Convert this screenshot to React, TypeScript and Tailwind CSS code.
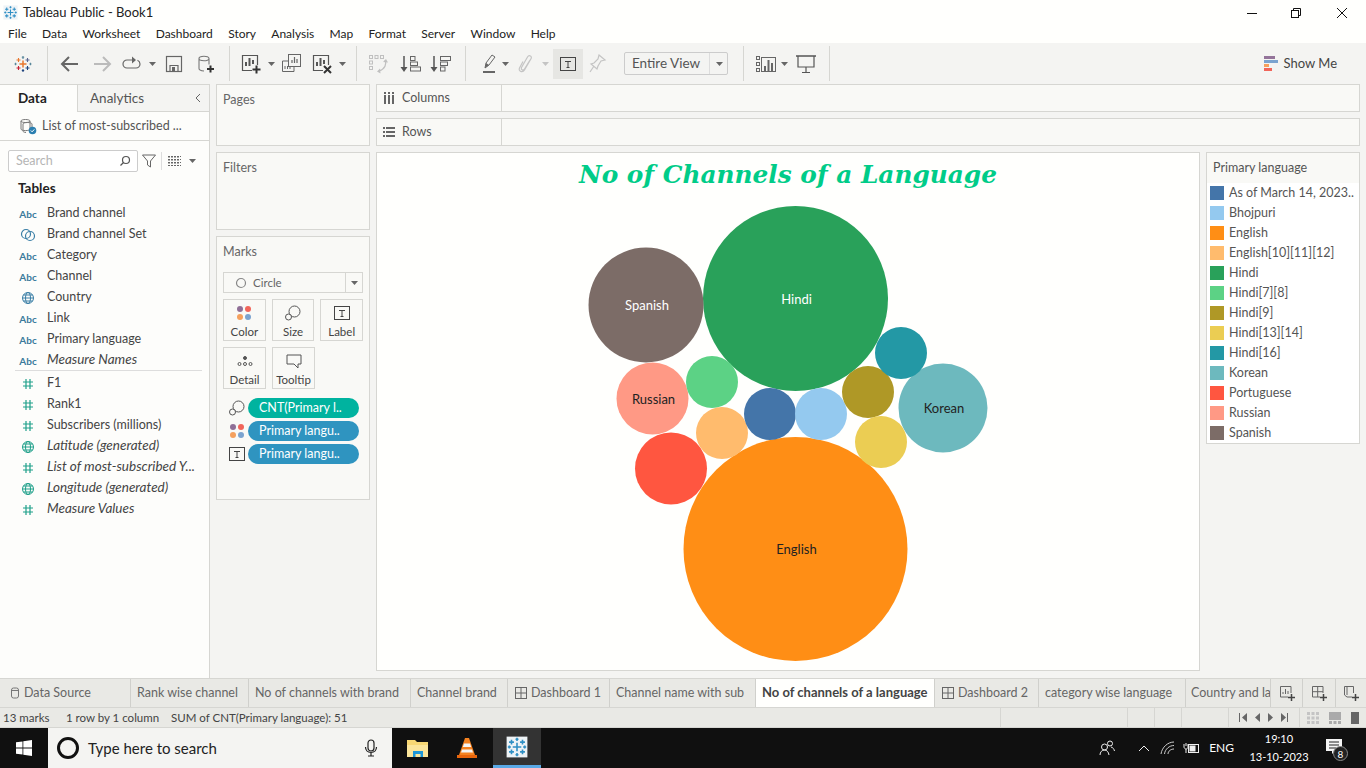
import React from 'react'

const menus = ['File', 'Data', 'Worksheet', 'Dashboard', 'Story', 'Analysis', 'Map', 'Format', 'Server', 'Window', 'Help']

const fields: { kind: 'abc' | 'set' | 'geo' | 'num' | 'numgeo'; name: string; italic?: boolean }[] = [
  { kind: 'abc', name: 'Brand channel' },
  { kind: 'set', name: 'Brand channel Set' },
  { kind: 'abc', name: 'Category' },
  { kind: 'abc', name: 'Channel' },
  { kind: 'geo', name: 'Country' },
  { kind: 'abc', name: 'Link' },
  { kind: 'abc', name: 'Primary language' },
  { kind: 'abc', name: 'Measure Names', italic: true },
]

const measures: { kind: 'abc' | 'set' | 'geo' | 'num' | 'numgeo'; name: string; italic?: boolean }[] = [
  { kind: 'num', name: 'F1' },
  { kind: 'num', name: 'Rank1' },
  { kind: 'num', name: 'Subscribers (millions)' },
  { kind: 'numgeo', name: 'Latitude (generated)', italic: true },
  { kind: 'num', name: 'List of most-subscribed Y...', italic: true },
  { kind: 'numgeo', name: 'Longitude (generated)', italic: true },
  { kind: 'num', name: 'Measure Values', italic: true },
]

const legend = [
  ['As of March 14, 2023..', '#4475a9'],
  ['Bhojpuri', '#94c9ef'],
  ['English', '#ff8e15'],
  ['English[10][11][12]', '#ffbb6d'],
  ['Hindi', '#29a15a'],
  ['Hindi[7][8]', '#5cd285'],
  ['Hindi[9]', '#af9826'],
  ['Hindi[13][14]', '#ebcd53'],
  ['Hindi[16]', '#2398a5'],
  ['Korean', '#6db9be'],
  ['Portuguese', '#ff5640'],
  ['Russian', '#ff9985'],
  ['Spanish', '#7c6c67'],
]

// page coordinates minus the viz origin (377, 153)
const bubbles = [
  { cx: 418.5, cy: 145.5, r: 92.5, fill: '#29a15a', label: 'Hindi', text: '#ffffff' },
  { cx: 418.5, cy: 396, r: 112, fill: '#ff8e15', label: 'English', text: '#222222' },
  { cx: 269, cy: 152, r: 57.5, fill: '#7c6c67', label: 'Spanish', text: '#ffffff' },
  { cx: 566, cy: 255, r: 44.5, fill: '#6db9be', label: 'Korean', text: '#222222' },
  { cx: 275.5, cy: 245.5, r: 36, fill: '#ff9985', label: 'Russian', text: '#222222' },
  { cx: 294, cy: 315.5, r: 36, fill: '#ff5640' },
  { cx: 335, cy: 229, r: 26, fill: '#5cd285' },
  { cx: 345, cy: 280, r: 26, fill: '#ffbb6d' },
  { cx: 393, cy: 261, r: 26, fill: '#4475a9' },
  { cx: 444, cy: 261, r: 26, fill: '#94c9ef' },
  { cx: 491, cy: 239, r: 26, fill: '#af9826' },
  { cx: 504, cy: 289, r: 26, fill: '#ebcd53' },
  { cx: 524, cy: 200, r: 26, fill: '#2398a5' },
]

const tabs: { name: string; w: string; icon?: 'db' | 'dash'; active?: boolean }[] = [
  { name: 'Data Source', w: 'w-[131px]', icon: 'db' },
  { name: 'Rank wise channel', w: 'w-[118px]' },
  { name: 'No of channels with brand', w: 'w-[162px]' },
  { name: 'Channel brand', w: 'w-[97px]' },
  { name: 'Dashboard 1', w: 'w-[102px]', icon: 'dash' },
  { name: 'Channel name with sub', w: 'w-[146px]' },
  { name: 'No of channels of a language', w: 'w-[179px]', active: true },
  { name: 'Dashboard 2', w: 'w-[104px]', icon: 'dash' },
  { name: 'category wise language', w: 'w-[147px]' },
]

function Caret({ light, className = '' }: { light?: boolean; className?: string }) {
  return (
    <svg width="7" height="4" viewBox="0 0 7 4" className={className}>
      <path d="M0 0h7L3.5 4z" fill={light ? '#c4c4c4' : '#666'} />
    </svg>
  )
}

function TableauLogo({ size = 18 }: { size?: number }) {
  return (
    <svg width={size} height={size} viewBox="0 0 18 18" fill="none" strokeWidth="1.1">
      <path d="M9 5.5v7M5.5 9h7" stroke="#e8762d" strokeWidth="1.5" />
      <path d="M4.5 3v4M2.5 5h4" stroke="#e8762d" />
      <path d="M13.500 3v4M11.500 5h4" stroke="#5b6591" />
      <path d="M4.500 11v4M2.500 13h4" stroke="#c72035" />
      <path d="M13.500 11v4M11.500 13h4" stroke="#1f447e" />
      <path d="M9 1v3M7.800 2.300h2.400" stroke="#59879b" />
      <path d="M9 14v3M7.800 15.500h2.400" stroke="#1f447e" />
      <path d="M1.500 7.800v2.400M.5 9h2.200" stroke="#59879b" />
      <path d="M16.500 7.800v2.400M15.300 9h2.200" stroke="#59879b" />
    </svg>
  )
}

function AppLogo({ size = 18 }: { size?: number }) {
  return (
    <svg width={size} height={size} viewBox="0 0 18 18" fill="none">
      <rect x="0.5" y="0.5" width="17" height="17" fill="#eef3f6" />
      <g stroke="#2f8fc4" strokeWidth="1.3">
        <path d="M9 5.5v7M5.5 9h7" />
        <path d="M4.5 3v4M2.5 5h4M13.5 3v4M11.5 5h4M4.5 11v4M2.5 13h4M13.5 11v4M11.5 13h4" />
        <path d="M9 1.5v2.5M7.8 2.7h2.4M9 14v2.5M7.8 15.3h2.4M1.5 9H4M2.7 7.8v2.4M14 9h2.5M15.3 7.8v2.4" />
      </g>
    </svg>
  )
}

function ToolIcon({ name }: { name: string }) {
  const p = { width: 22, height: 22, viewBox: '0 0 22 22', fill: 'none' }
  switch (name) {
    case 'back':
      return <svg {...p}><path d="M19 11H3M10 4l-7 7 7 7" stroke="#666" strokeWidth="2" /></svg>
    case 'forward':
      return <svg {...p}><path d="M3 11h16M12 4l7 7-7 7" stroke="#bbb" strokeWidth="2" /></svg>
    case 'cycle':
      return (
        <svg {...p}>
          <path d="M12 7H6a4 4 0 0 0 0 8h9a4 4 0 0 0 4-4c0-2-1-3-2.500-3.700" stroke="#666" strokeWidth="1.200" />
          <path d="M11 3.500l4 3.500-4 3.500z" fill="#666" />
        </svg>
      )
    case 'save':
      return (
        <svg {...p}>
          <rect x="3.500" y="3.500" width="15" height="15" stroke="#666" strokeWidth="1.200" />
          <path d="M7 18.500v-6h8v6" stroke="#666" strokeWidth="1.200" />
          <rect x="9" y="14" width="3" height="4" fill="#666" />
        </svg>
      )
    case 'newds':
      return (
        <svg {...p}>
          <path d="M4 5.500c0-3 10-3 10 0v6M4 5.500v10c0 1.500 2 2.300 5 2.500M4 5.500c0 3 10 3 10 0" stroke="#777" strokeWidth="1.100" />
          <path d="M15.500 12.500v7M12 16h7" stroke="#333" strokeWidth="2" />
        </svg>
      )
    case 'newsheet':
      return (
        <svg {...p}>
          <path d="M12 17.500H2.500v-15h15V12" stroke="#555" strokeWidth="1.200" />
          <path d="M6 13V9M9.500 13V5M13 11V7" stroke="#555" strokeWidth="2" />
          <path d="M16.500 12.500v8M12.500 16.500h8" stroke="#333" strokeWidth="2" />
        </svg>
      )
    case 'dup':
      return (
        <svg {...p}>
          <rect x="8.500" y="1.500" width="12" height="12" stroke="#666" fill="#f4f4f2" />
          <path d="M12 10V7M14.500 10V4M17 10V6" stroke="#666" strokeWidth="1.200" />
          <path d="M8 8H2.500v10.500H14V14" stroke="#666" />
          <path d="M5 16v-3M7.500 16v-3M10 16v-2" stroke="#666" />
        </svg>
      )
    case 'clear':
      return (
        <svg {...p}>
          <path d="M12 17.500H2.500v-15h15V12" stroke="#555" strokeWidth="1.200" />
          <path d="M6 13V9M9.500 13V5M13 11V7" stroke="#555" strokeWidth="2" />
          <path d="M13 13l7 7M20 13l-7 7" stroke="#333" strokeWidth="2" />
        </svg>
      )
    case 'swap':
      return (
        <svg {...p}>
          <g stroke="#c0c0c0">
            <rect x="1.500" y="2.500" width="3" height="3" />
            <rect x="7" y="2.500" width="3" height="3" />
            <rect x="12.500" y="2.500" width="3" height="3" />
            <rect x="1.500" y="8" width="3" height="3" />
            <rect x="1.500" y="13.500" width="3" height="3" />
            <path d="M17 7c2 4 0 9-6 11" strokeWidth="1.300" />
          </g>
          <path d="M12 15.500l-3 3 3.500 2zM15 9l3-3 2 3.500z" fill="#c0c0c0" />
        </svg>
      )
    case 'sortasc':
      return (
        <svg {...p}>
          <path d="M5 3v13" stroke="#555" strokeWidth="1.500" />
          <path d="M1.500 14h7L5 19z" fill="#555" />
          <rect x="11.500" y="3.500" width="4.500" height="4" stroke="#666" />
          <rect x="11.500" y="9" width="7" height="3.500" stroke="#666" />
          <rect x="11.500" y="14" width="10" height="4" stroke="#666" />
        </svg>
      )
    case 'sortdesc':
      return (
        <svg {...p}>
          <path d="M5 3v13" stroke="#555" strokeWidth="1.500" />
          <path d="M1.500 14h7L5 19z" fill="#555" />
          <rect x="11.500" y="3.500" width="10" height="4" stroke="#666" />
          <rect x="11.500" y="9" width="7" height="3.500" stroke="#666" />
          <rect x="11.500" y="14" width="4.500" height="4" stroke="#666" />
        </svg>
      )
    case 'highlight':
      return (
        <svg {...p}>
          <path d="M6 15l1-5 6-8 3 2-6 8z" stroke="#666" />
          <path d="M6 15l4-3-3-2z" fill="#666" />
          <rect x="4" y="18" width="12" height="2" fill="#666" />
        </svg>
      )
    case 'clip':
      return (
        <svg {...p}>
          <path d="M15 7l-5.500 9c-1.200 2-4 .8-3-1.500L12.500 4c1.500-2.500 5-.8 3.500 1.800L9.500 17c-2 3.200-6.500 1.200-5-2L8 8.500" stroke="#c4c4c4" strokeWidth="1.200" />
        </svg>
      )
    case 'pin':
      return (
        <svg {...p}>
          <path d="M13 2l6 5-4 1-3 5-1 3-6-5 3-1 4-4zM8 13l-4 6" stroke="#c4c4c4" strokeWidth="1.200" />
        </svg>
      )
    case 'showme':
      return (
        <svg {...p}>
          <g stroke="#666">
            <rect x="1.500" y="3.500" width="3" height="3" />
            <rect x="1.500" y="9.500" width="3" height="3" />
            <rect x="1.500" y="15.500" width="3" height="3" />
            <rect x="6.500" y="4.500" width="14" height="14" />
          </g>
          <path d="M10 18v-5M13.500 18V7M17 18v-8" stroke="#666" strokeWidth="2" />
        </svg>
      )
    case 'present':
      return (
        <svg {...p}>
          <path d="M1 3h20" stroke="#555" strokeWidth="1.500" />
          <path d="M3 3v11h16V3M11 14v5M7 19.500h8" stroke="#555" strokeWidth="1.200" />
        </svg>
      )
    default:
      return null
  }
}

function Divider() {
  return <div className="h-[35px] w-px bg-[#d6d6d2]" />
}

function TIcon({ size = 18 }: { size?: number }) {
  return (
    <svg width={size} height={size} viewBox="0 0 18 18" fill="none">
      <rect x="1.500" y="2.500" width="15" height="13" stroke="#444" />
      <path d="M6 6.500h6M9 6.500v6M7.500 12.500h3" stroke="#444" />
    </svg>
  )
}

function ColorDots({ size = 16 }: { size?: number }) {
  return (
    <svg width={size} height={size} viewBox="0 0 16 16">
      <circle cx="4" cy="4" r="3" fill="#8f6f96" />
      <circle cx="12" cy="4" r="3" fill="#f1655a" />
      <circle cx="4" cy="12" r="3" fill="#f5a05d" />
      <circle cx="12" cy="12" r="3" fill="#7ba3cf" />
    </svg>
  )
}

function SizeIcon({ size = 16 }: { size?: number }) {
  return (
    <svg width={size} height={size} viewBox="0 0 16 16" fill="none" stroke="#555">
      <circle cx="9.500" cy="6.500" r="5.500" />
      <circle cx="3.500" cy="12" r="3" fill="#f9f9f6" />
    </svg>
  )
}

function FieldIcon({ kind }: { kind: string }) {
  if (kind === 'abc') {
    return <span className="w-[20px] text-center text-[10px] font-bold leading-none text-[#3a7a9c]">Abc</span>
  }
  if (kind === 'set') {
    return (
      <svg width="20" height="14" viewBox="0 0 20 14" fill="none" stroke="#3a7fa6" strokeWidth="1.200">
        <circle cx="8" cy="6" r="4.500" />
        <circle cx="12" cy="8" r="4.500" />
      </svg>
    )
  }
  if (kind === 'geo' || kind === 'numgeo') {
    const c = kind === 'geo' ? '#3a7fa6' : '#1fa08a'
    return (
      <svg width="20" height="14" viewBox="0 0 20 14" fill="none" stroke={c}>
        <circle cx="10" cy="7" r="5.500" />
        <ellipse cx="10" cy="7" rx="2.500" ry="5.500" />
        <path d="M4.500 7h11M5.300 4h9.400M5.300 10h9.400" />
      </svg>
    )
  }
  return (
    <svg width="20" height="14" viewBox="0 0 20 14" fill="none" stroke="#1fa08a" strokeWidth="1.200">
      <path d="M8 2v10M12 2v10M5 5h10M5 9h10" />
    </svg>
  )
}

function FieldRow({ kind, name, italic }: { kind: string; name: string; italic?: boolean }) {
  return (
    <div className="flex h-[21px] items-center pl-[18px]">
      <FieldIcon kind={kind} />
      <span className={`ml-[9px] whitespace-nowrap text-[#444] ${italic ? '-mt-[2px] text-[13.500px] italic' : '-mt-[1px] text-[12.500px]'}`}>{name}</span>
    </div>
  )
}

function MarkButton({ label, children }: { label: string; children: React.ReactNode }) {
  return (
    <div className="flex h-[42px] w-[43px] flex-col items-center justify-between border border-[#d6d6d2] pb-[1px] pt-[4px]">
      <div className="flex h-[18px] items-center">{children}</div>
      <span className="text-[11.500px] leading-[14px] text-[#444]">{label}</span>
    </div>
  )
}

function Pill({ icon, label, color }: { icon: React.ReactNode; label: string; color: string }) {
  return (
    <div className="flex h-[20px] items-center">
      <div className="flex w-[25px] justify-center pl-[3px]">{icon}</div>
      <div className={`flex h-[20px] w-[111px] items-center rounded-full pl-[11px] text-[12.500px] text-white ${color}`}>{label}</div>
    </div>
  )
}

function Shelf({ icon, label }: { icon: React.ReactNode; label: string }) {
  return (
    <div className="flex h-[28px] border border-[#d6d6d2] bg-[#f9f9f6]">
      <div className="flex w-[125px] items-center border-r border-[#d6d6d2] pl-[6px] text-[12.500px] text-[#555]">
        {icon}
        <span className="ml-[7px]">{label}</span>
      </div>
    </div>
  )
}

function App() {
  return (
    <div className="flex h-[768px] w-[1366px] flex-col overflow-hidden bg-[#f4f4f2] font-['Lato',sans-serif] text-[#333]">
      {/* title bar */}
      <div className="flex h-[25px] shrink-0 items-center bg-[#fffffd] pl-[3px]">
        <AppLogo size={15} />
        <span className="ml-[5px] text-[13px] text-[#222]">Tableau Public - Book1</span>
        <div className="ml-auto flex h-full items-center">
          <svg width="12" height="12" viewBox="0 0 12 12" className="mr-[32px]"><path d="M1 6.500h10" stroke="#111" /></svg>
          <svg width="12" height="12" viewBox="0 0 12 12" fill="none" stroke="#111" className="mr-[34px]">
            <rect x="1.500" y="3.500" width="7" height="7" />
            <path d="M3.500 3.500v-2h7v7h-2" />
          </svg>
          <svg width="12" height="12" viewBox="0 0 12 12" className="mr-[18px]"><path d="M1 1l10 10M11 1L1 11" stroke="#111" /></svg>
        </div>
      </div>

      {/* menu bar */}
      <div className="flex h-[18px] shrink-0 items-center gap-[15.300px] bg-[#fffffd] pl-[8px] text-[12px] text-[#222]">
        {menus.map(m => (
          <span key={m}>{m}</span>
        ))}
      </div>

      {/* toolbar */}
      <div className="flex h-[41px] shrink-0 items-center bg-[#f4f4f2] pl-[14px]">
        <TableauLogo />
        <div className="ml-[15px]"><Divider /></div>
        <div className="ml-[11px]"><ToolIcon name="back" /></div>
        <div className="ml-[10px]"><ToolIcon name="forward" /></div>
        <div className="ml-[8px]"><ToolIcon name="cycle" /></div>
        <Caret className="ml-[6px]" />
        <div className="ml-[7px]"><ToolIcon name="save" /></div>
        <div className="ml-[10px]"><ToolIcon name="newds" /></div>
        <div className="ml-[12px]"><Divider /></div>
        <div className="ml-[10px]"><ToolIcon name="newsheet" /></div>
        <Caret className="ml-[6px]" />
        <div className="ml-[5px]"><ToolIcon name="dup" /></div>
        <div className="ml-[9px]"><ToolIcon name="clear" /></div>
        <Caret className="ml-[6px]" />
        <div className="ml-[10px]"><Divider /></div>
        <div className="ml-[11px]"><ToolIcon name="swap" /></div>
        <div className="ml-[9px]"><ToolIcon name="sortasc" /></div>
        <div className="ml-[8px]"><ToolIcon name="sortdesc" /></div>
        <div className="ml-[14px]"><Divider /></div>
        <div className="ml-[13px]"><ToolIcon name="highlight" /></div>
        <Caret className="ml-[1px]" />
        <div className="ml-[6px]"><ToolIcon name="clip" /></div>
        <Caret light className="ml-[5px]" />
        <div className="ml-[4px] flex h-[30px] w-[30px] items-center justify-center bg-[#e6e6e3]"><TIcon /></div>
        <div className="ml-[3px]"><ToolIcon name="pin" /></div>
        <div className="ml-[16px] flex h-[23px] w-[104px] items-center rounded-[2px] border border-[#ccc] text-[13.500px] text-[#555]">
          <span className="w-[85px] border-r border-[#ddd] pl-[7px] leading-[21px]">Entire View</span>
          <Caret className="ml-[6px]" />
        </div>
        <div className="ml-[15px]"><Divider /></div>
        <div className="ml-[11px]"><ToolIcon name="showme" /></div>
        <Caret className="ml-[4px]" />
        <div className="ml-[7px]"><ToolIcon name="present" /></div>
        <div className="ml-[12px]"><Divider /></div>
        <div className="ml-auto mr-[29px] flex items-center text-[13px] text-[#444]">
          <svg width="15" height="16" viewBox="0 0 15 16" className="mr-[5px]">
            <rect x="0" y="0" width="11" height="3" fill="#94749a" />
            <rect x="0" y="4" width="14" height="3" fill="#7ba3cf" />
            <rect x="0" y="8" width="5" height="3" fill="#f5a05d" />
            <rect x="0" y="12" width="8" height="3" fill="#f1655a" />
          </svg>
          Show Me
        </div>
      </div>

      {/* main */}
      <div className="flex min-h-0 flex-1">
        {/* data pane */}
        <div className="flex w-[210px] shrink-0 flex-col border-r border-t border-[#d6d6d2] bg-[#fdfdfb]">
          <div className="flex h-[27px] shrink-0 text-[13.500px]">
            <div className="flex w-[77px] items-center pl-[18px] font-bold text-[#222]">Data</div>
            <div className="flex flex-1 items-center justify-between border-b border-l border-[#d6d6d2] bg-[#f4f4f2] pl-[12px] pr-[7px] text-[#555]">
              Analytics
              <svg width="8" height="10" viewBox="0 0 8 10" fill="none" stroke="#666"><path d="M6 1L2 5l4 4" /></svg>
            </div>
          </div>
          <div className="flex h-[29px] shrink-0 items-center border-b border-[#d6d6d2] pl-[20px] text-[12.500px] text-[#555]">
            <svg width="17" height="17" viewBox="0 0 17 17" fill="none">
              <path d="M1 3c0-2 9-2 9 0v8c0 1-2 1.600-4.500 1.600S1 12 1 11zM1 3c0 2 9 2 9 0" stroke="#777" />
              <path d="M3 6c0-2 9-2 9 0v3M3 6v7c0 .8 1 1.300 3 1.500" stroke="#777" />
              <circle cx="12.500" cy="12.500" r="3.800" fill="#2b7fb0" />
              <path d="M10.800 12.500l1.300 1.300 2.200-2.400" stroke="#fff" />
            </svg>
            <span className="ml-[5px]">List of most-subscribed ...</span>
          </div>
          <div className="flex shrink-0 items-center pl-[8px] pt-[9px]">
            <div className="flex h-[22px] w-[130px] items-center justify-between rounded-[2px] border border-[#ccc] bg-white pl-[7px] pr-[6px] text-[12.500px] text-[#b5b5b5]">
              Search
              <svg width="12" height="12" viewBox="0 0 12 12" fill="none" stroke="#555" strokeWidth="1.200"><circle cx="7" cy="5" r="3.500" /><path d="M4.500 7.500L1.500 10.500" /></svg>
            </div>
            <svg width="14" height="14" viewBox="0 0 14 14" fill="none" stroke="#666" className="ml-[4px]"><path d="M.5 1h13L8.500 7v6l-3-2V7z" /></svg>
            <div className="ml-[5px] h-[18px] w-px bg-[#ddd]" />
            <svg width="13" height="10" viewBox="0 0 13 10" className="ml-[6px]" stroke="#666"><path d="M0 .5h13M0 3.500h13M0 6.500h13M0 9.500h13M1 0v10M4 0v10M7 0v10M10 0v10" strokeDasharray="2 1" /></svg>
            <Caret className="ml-[8px]" />
          </div>
          <div className="pl-[18px] pt-[7px] text-[13.500px] font-bold leading-[18px] text-[#222]">Tables</div>
          <div className="pt-[6px]">
            {fields.map(f => (
              <FieldRow key={f.name} {...f} />
            ))}
          </div>
          <div className="-mt-[1px] mb-[2px] ml-[15px] mr-[7px] h-px bg-[#ddd]" />
          <div>
            {measures.map(f => (
              <FieldRow key={f.name} {...f} />
            ))}
          </div>
        </div>

        {/* cards column */}
        <div className="ml-[6px] flex w-[154px] shrink-0 flex-col gap-[6px]">
          <div className="h-[62px] border border-[#d6d6d2] bg-[#f9f9f6] pl-[6px] pt-[6px] text-[12.500px] text-[#666]">Pages</div>
          <div className="h-[78px] border border-[#d6d6d2] bg-[#f9f9f6] pl-[6px] pt-[6px] text-[12.500px] text-[#666]">Filters</div>
          <div className="h-[264px] border border-[#d6d6d2] bg-[#f9f9f6] px-[6px] pt-[7px]">
            <div className="text-[12.500px] leading-[16px] text-[#666]">Marks</div>
            <div className="mt-[12px] flex h-[21px] items-center border border-[#d6d6d2] text-[11.500px] text-[#666]">
              <svg width="12" height="12" viewBox="0 0 12 12" fill="none" stroke="#888" strokeWidth="1.200" className="ml-[11px]"><circle cx="6" cy="6" r="4.500" /></svg>
              <span className="ml-[6px] w-[92px]">Circle</span>
              <div className="flex h-full flex-1 items-center justify-center border-l border-[#d6d6d2]"><Caret /></div>
            </div>
            <div className="mt-[6px] flex gap-[6px]">
              <MarkButton label="Color"><ColorDots /></MarkButton>
              <MarkButton label="Size"><SizeIcon /></MarkButton>
              <MarkButton label="Label"><TIcon /></MarkButton>
            </div>
            <div className="mt-[6px] flex gap-[6px]">
              <MarkButton label="Detail">
                <svg width="16" height="14" viewBox="0 0 16 14" fill="none" stroke="#555">
                  <circle cx="8" cy="4" r="1.500" fill="#555" />
                  <circle cx="2.500" cy="10" r="1.500" />
                  <circle cx="8" cy="10" r="1.500" />
                  <circle cx="13.500" cy="10" r="1.500" />
                </svg>
              </MarkButton>
              <MarkButton label="Tooltip">
                <svg width="16" height="15" viewBox="0 0 16 15" fill="none" stroke="#555"><path d="M1 1h14v9h-3v4l-4-4H1z" /></svg>
              </MarkButton>
            </div>
            <div className="mt-[9px] flex flex-col gap-[3px]">
              <Pill icon={<SizeIcon />} label="CNT(Primary l.." color="bg-[#00b39f]" />
              <Pill icon={<ColorDots />} label="Primary langu.." color="bg-[#2f94c0]" />
              <Pill icon={<TIcon />} label="Primary langu.." color="bg-[#2f94c0]" />
            </div>
          </div>
        </div>

        {/* shelves and view */}
        <div className="ml-[6px] flex w-[984px] shrink-0 flex-col gap-[6px]">
          <Shelf
            label="Columns"
            icon={
              <svg width="12" height="12" viewBox="0 0 12 12" fill="#666">
                <rect x="1" y="0" width="2" height="2" /><rect x="1" y="3" width="2" height="9" />
                <rect x="5" y="0" width="2" height="2" /><rect x="5" y="3" width="2" height="9" />
                <rect x="9" y="0" width="2" height="2" /><rect x="9" y="3" width="2" height="9" />
              </svg>
            }
          />
          <Shelf
            label="Rows"
            icon={
              <svg width="12" height="12" viewBox="0 0 12 12" fill="#666">
                <rect x="0" y="1" width="2" height="2" /><rect x="3" y="1" width="9" height="2" />
                <rect x="0" y="5" width="2" height="2" /><rect x="3" y="5" width="9" height="2" />
                <rect x="0" y="9" width="2" height="2" /><rect x="3" y="9" width="9" height="2" />
              </svg>
            }
          />
          <div className="flex gap-[6px]">
            <div className="h-[519px] w-[824px] border border-[#d6d6d2] bg-[#fffffd]">
              <div className="pt-[5px] text-center font-['DejaVu_Serif',serif] text-[24.800px] font-bold italic leading-[34px] text-[#00cc88]">
                No of Channels of a Language
              </div>
              <svg width="822" height="477" viewBox="0 0 822 477">
                <g transform="translate(0 -39)">
                  {bubbles.map(b => (
                    <circle key={b.cx + '-' + b.cy} cx={b.cx} cy={b.cy} r={b.r} fill={b.fill} />
                  ))}
                  {bubbles.filter(b => b.label).map(b => (
                    <text key={b.label} x={b.cx + 1} y={b.cy + 5} textAnchor="middle" fontSize="13" fill={b.text} fontFamily="Lato, sans-serif">
                      {b.label}
                    </text>
                  ))}
                </g>
              </svg>
            </div>
            <div className="h-[292px] w-[154px] border border-[#d6d6d2] bg-white">
              <div className="h-[30px] bg-[#f9f9f6] pl-[6px] pt-[7px] text-[12.500px] leading-[16px] text-[#555]">Primary language</div>
              <div className="pl-[3px]">
                {legend.map(([name, color]) => (
                  <div key={name} className="flex h-[20px] items-center whitespace-nowrap text-[12.500px] text-[#555]">
                    <span className="h-[14px] w-[14px] shrink-0" style={{ backgroundColor: color }} />
                    <span className="ml-[5px]">{name}</span>
                  </div>
                ))}
              </div>
            </div>
          </div>
        </div>
      </div>

      {/* sheet tabs */}
      <div className="flex h-[30px] shrink-0 border-y border-[#d6d6d2] bg-[#e9e9e5] text-[12.500px] text-[#666]">
        {tabs.map(t => (
          <div
            key={t.name}
            className={`flex shrink-0 items-center whitespace-nowrap border-r border-[#d0d0cc] ${t.w} ${
              t.icon === 'db' ? 'pl-[10px]' : t.active ? 'bg-[#fffffd] pl-[6px] text-[13px] font-bold text-[#444]' : 'pl-[6px]'
            }`}
          >
            {t.icon === 'db' && (
              <svg width="10" height="12" viewBox="0 0 10 12" fill="none" stroke="#777" className="mr-[4px]">
                <rect x="1.500" y="1" width="7" height="10" rx="2" /><path d="M1.500 3.500h7" />
              </svg>
            )}
            {t.icon === 'dash' && (
              <svg width="12" height="12" viewBox="0 0 12 12" fill="none" stroke="#666" className="ml-[1px] mr-[4px]">
                <rect x="0.500" y="0.500" width="11" height="11" /><path d="M6 .5v11M.5 6h11" />
              </svg>
            )}
            {t.name}
          </div>
        ))}
        <div className="flex w-[84px] shrink-0 items-center overflow-hidden whitespace-nowrap pl-[5px]">Country and la</div>
        <div className="flex w-[32px] shrink-0 items-center justify-center border-l border-[#d0d0cc]">
          <svg width="18" height="18" viewBox="0 0 18 18" fill="none" stroke="#666"><path d="M10 13H2.500V2.500H13V9" /><path d="M5 10V8M7.500 10V5M10 10V7" /><path d="M13.500 10v7M10 13.500h7" stroke="#444" strokeWidth="1.500" /></svg>
        </div>
        <div className="flex w-[33px] shrink-0 items-center justify-center border-l border-[#d0d0cc]">
          <svg width="18" height="18" viewBox="0 0 18 18" fill="none" stroke="#666"><path d="M10 13H2.500V2.500H13V9M7.700 2.500V13M2.500 7.700H13" /><path d="M13.500 10v7M10 13.500h7" stroke="#444" strokeWidth="1.500" /></svg>
        </div>
        <div className="flex flex-1 items-center justify-center border-l border-[#d0d0cc]">
          <svg width="18" height="18" viewBox="0 0 18 18" fill="none" stroke="#666"><path d="M10 13H5L2.500 11V2.500h9V9M5 3v8" /><path d="M13.500 10v7M10 13.500h7" stroke="#444" strokeWidth="1.500" /></svg>
        </div>
      </div>

      {/* status bar */}
      <div className="flex h-[20px] shrink-0 items-center border-b border-[#d6d6d2] bg-[#e9e9e5] text-[11.500px] text-[#444]">
        <span className="ml-[3px] w-[63px]">13 marks</span>
        <span className="w-[105px]">1 row by 1 column</span>
        <span className="w-[829px]">SUM of CNT(Primary language): 51</span>
        <div className="flex h-full">
          <div className="w-[127px] border-l border-[#d6d6d2]" />
          <div className="w-[27px] border-l border-[#d6d6d2]" />
          <div className="w-[27px] border-l border-[#d6d6d2]" />
          <div className="w-[47px] border-l border-[#d6d6d2]" />
          <div className="flex w-[71px] items-center justify-center gap-[6px] border-l border-[#d6d6d2]">
            <svg width="50" height="9" viewBox="0 0 50 9" fill="#666">
              <path d="M0 0h1v9H0zM8 0v9L3 4.500z" />
              <path d="M21 0v9l-5-4.500z" />
              <path d="M29 0v9l5-4.500z" />
              <path d="M42 0v9l5-4.500zM48 0h1v9h-1z" />
            </svg>
          </div>
          <div className="flex w-[61px] items-center gap-[10px] border-l border-[#d6d6d2] pl-[7px]">
            <svg width="12" height="12" viewBox="0 0 12 12" fill="#c4c4c4">
              <path d="M0 0h3v3H0zM4.500 0h3v3h-3zM9 0h3v3H9zM0 4.500h3v3H0zM4.500 4.500h3v3h-3zM9 4.500h3v3H9zM0 9h3v3H0zM4.500 9h3v3h-3zM9 9h3v3H9z" />
            </svg>
            <svg width="12" height="12" viewBox="0 0 12 12"><path d="M0 0h12v8H0zM0 9h3v3H0zM4.500 9h3v3h-3zM9 9h3v3H9z" fill="#aaa" /></svg>
            <div className="h-[12px] w-[8px] bg-[#666]" />
          </div>
        </div>
      </div>

      {/* taskbar */}
      <div className="flex h-[40px] shrink-0 items-center bg-[#101010] text-white">
        <div className="flex h-full w-[48px] items-center justify-center">
          <svg width="16" height="16" viewBox="0 0 16 16" fill="#fff"><path d="M0 2.300l6.500-.9v6.200H0zM7.300 1.300L16 0v7.600H7.300zM0 8.400h6.500v6.200L0 13.700zM7.300 8.400H16V16l-8.700-1.200z" /></svg>
        </div>
        <div className="flex h-full w-[344px] items-center bg-[#f4f4f2] text-[15px] text-[#222]">
          <svg width="24" height="24" viewBox="0 0 24 24" fill="none" stroke="#111" strokeWidth="3" className="ml-[8px]"><circle cx="12" cy="12" r="9.500" /></svg>
          <span className="ml-[8px]">Type here to search</span>
          <svg width="14" height="18" viewBox="0 0 14 18" fill="none" stroke="#222" strokeWidth="1.200" className="ml-auto mr-[14px]">
            <rect x="4" y="1" width="6" height="11" rx="3" /><path d="M1.500 8c0 3 2 5.500 5.500 5.500S12.500 11 12.500 8M7 13.500V17M4 17h6" />
          </svg>
        </div>
        <div className="ml-[15px] flex w-[22px] justify-center">
          <svg width="22" height="19" viewBox="0 0 22 19">
            <path d="M0 1h8l2 2h11v15H0z" fill="#f7d774" />
            <path d="M0 6h21v12H0z" fill="#fbe59b" />
            <path d="M6 12h10v6h-2.500v-3h-5v3H6z" fill="#1e97d8" />
          </svg>
        </div>
        <div className="ml-[27px] flex w-[22px] justify-center">
          <svg width="20" height="22" viewBox="0 0 20 22">
            <path d="M8 1h4l6 17H2z" fill="#f58220" />
            <path d="M7 6.500h6l1.200 3.500H5.800zM5 12.500h10l1 3H4z" fill="#f4f4f4" />
            <path d="M0 18h20v3H0z" fill="#e8650c" />
          </svg>
        </div>
        <div className="ml-[15px] flex h-full w-[48px] items-center justify-center border-b-[3px] border-[#5aa9e6] bg-[#333]">
          <AppLogo size={22} />
        </div>
        <div className="ml-auto flex h-full items-center">
          <svg width="16" height="16" viewBox="0 0 16 16" fill="none" stroke="#eee" className="mr-[23px]">
            <circle cx="5.500" cy="7" r="3" /><path d="M1 15c0-3 2-5 4.500-5s4 2 4.500 5" /><circle cx="11" cy="3.500" r="2.500" /><path d="M12 7c2 .5 3 2 3.500 4" />
          </svg>
          <svg width="12" height="7" viewBox="0 0 12 7" fill="none" stroke="#eee" className="mr-[10px]"><path d="M1 6l5-5 5 5" /></svg>
          <svg width="15" height="14" viewBox="0 0 15 14" fill="none" stroke="#ccc" className="mr-[8px]"><path d="M14 1C8 1 2 6 1 13M14 4.500C9.500 4.500 5 8 4.500 13M14 8c-3 0-6 2-6 5" /></svg>
          <svg width="16" height="12" viewBox="0 0 16 12" fill="none" stroke="#eee" className="mr-[10px]">
            <rect x="5.500" y="2.500" width="10" height="8" /><rect x="7" y="4" width="5" height="5" fill="#eee" /><path d="M3 1v3M1 2v3c0 1 1 2 2 2s2-1 2-2V2M3 7v4" />
          </svg>
          <span className="mr-[15px] text-[12px]">ENG</span>
          <div className="mr-[17px] flex w-[60px] flex-col items-center text-[11px] leading-[18px]">
            <span>19:10</span>
            <span>13-10-2023</span>
          </div>
          <div className="relative mr-[22px] h-[24px] w-[18px]">
            <svg width="16" height="16" viewBox="0 0 16 16" className="mt-[3px]" fill="#f4f4f4">
              <path d="M0 0h16v12h-7l-3 3v-3H0z" />
              <path d="M3 3h10M3 6h10M3 9h7" stroke="#222" />
            </svg>
            <span className="absolute left-[7px] top-[10px] flex h-[15px] w-[15px] items-center justify-center rounded-full border border-[#888] bg-[#222] text-[10px] leading-none">8</span>
          </div>
        </div>
      </div>
    </div>
  )
}

export default App
